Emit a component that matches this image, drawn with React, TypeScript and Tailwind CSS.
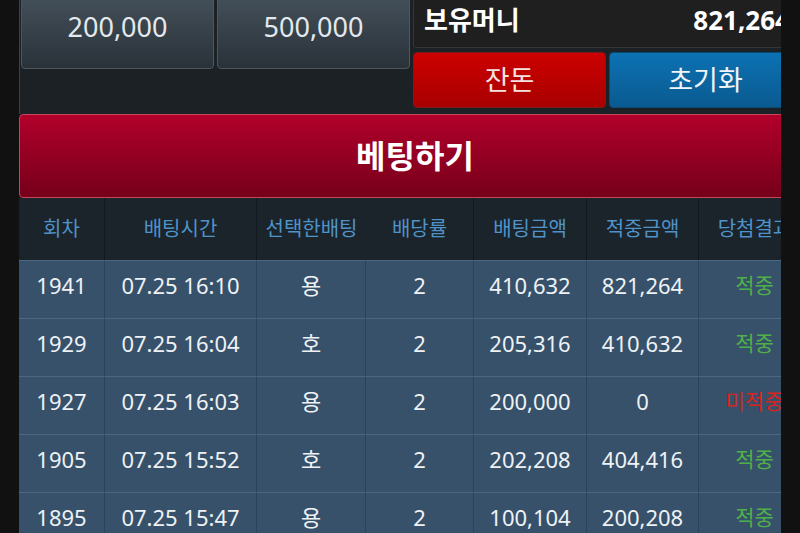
import React from 'react';

const FONT = { fontFamily: '"Noto Sans", "Noto Sans CJK KR", sans-serif' };

const rows = [
  { no: '1941', time: '07.25 16:10', pick: '용', rate: '2', bet: '410,632', win: '821,264', result: '적중' },
  { no: '1929', time: '07.25 16:04', pick: '호', rate: '2', bet: '205,316', win: '410,632', result: '적중' },
  { no: '1927', time: '07.25 16:03', pick: '용', rate: '2', bet: '200,000', win: '0', result: '미적중' },
  { no: '1905', time: '07.25 15:52', pick: '호', rate: '2', bet: '202,208', win: '404,416', result: '적중' },
  { no: '1895', time: '07.25 15:47', pick: '용', rate: '2', bet: '100,104', win: '200,208', result: '적중' },
];

const headers = ['회차', '배팅시간', '선택한배팅', '배당률', '배팅금액', '적중금액', '당첨결과'];

const AmountButton = ({ label }: { label: string }) => (
  <button className="w-[193px] h-[84px] rounded-[4px] border border-[#4d5760] bg-gradient-to-b from-[#47545f] to-[#2a3239] text-[27px] text-[#e4e9ed] flex items-center justify-center">
    {label}
  </button>
);

export default function App() {
  return (
    <div className="w-[800px] h-[533px] overflow-hidden bg-[#111111]" style={FONT}>
      <div className="ml-[19px] w-[762px] h-[533px] overflow-hidden">
        <div className="w-[792px]">
          {/* top controls */}
          <div className="bg-[#1c2125] border-l border-[#3a4248] pb-[6px]">
            <div className="flex gap-[3px] pl-[1px] -mt-[15px]">
              <div className="flex gap-[3px] items-start">
                <AmountButton label="200,000" />
                <AmountButton label="500,000" />
              </div>
              <div className="w-[396px] pt-[7px] flex flex-col gap-[4px]">
                <div className="h-[56px] bg-[#1f1f1f] border border-[#363636] rounded-[3px] flex items-center justify-between pl-[10px] pr-[18px] text-white font-bold text-[26px]">
                  <span>보유머니</span>
                  <span>821,264</span>
                </div>
                <div className="flex gap-[3px] h-[56px]">
                  <button className="w-[193px] rounded-[4px] border border-[#7c1a1a] bg-gradient-to-b from-[#cc0000] to-[#a80000] text-[27px] text-[#f3e3e3]">
                    잔돈
                  </button>
                  <button className="w-[193px] rounded-[4px] border border-[#0b4a72] bg-gradient-to-b from-[#0c72b3] to-[#0a5a90] text-[27px] text-[#eef4f8]">
                    초기화
                  </button>
                </div>
              </div>
            </div>
          </div>

          {/* bet button */}
          <button className="w-full h-[84px] rounded-[4px] border border-[#c2475a] bg-gradient-to-b from-[#b2002b] to-[#76001a] text-white font-bold text-[32px] flex items-center justify-center">
            베팅하기
          </button>

          {/* history table */}
          <div className="grid grid-cols-[86px_152px_109px_108px_113px_112px_112px]">
            {headers.map((h, i) => (
              <div
                key={h}
                className={
                  'h-[62px] bg-[#1b242b] flex items-center justify-center text-[20px] text-[#4f93c9] whitespace-nowrap ' +
                  (i === 2 ? '' : 'border-r border-[#121a20]')
                }
              >
                {h}
              </div>
            ))}
            {rows.map((r) =>
              [r.no, r.time, r.pick, r.rate, r.bet, r.win, r.result].map((v, i) => (
                <div
                  key={r.no + '-' + i}
                  className={
                    'h-[58px] bg-[#37516a] border-t border-[#4b6882] border-r border-r-[#2c4256] flex items-center justify-center whitespace-nowrap pb-[8px] ' +
                    (i === 6
                      ? r.result === '적중'
                        ? 'text-[21px] text-[#4fb04a]'
                        : 'text-[21px] text-[#d8231f]'
                      : 'text-[22px] text-[#eef2f5]')
                  }
                >
                  {v}
                </div>
              ))
            )}
          </div>
        </div>
      </div>
    </div>
  );
}
